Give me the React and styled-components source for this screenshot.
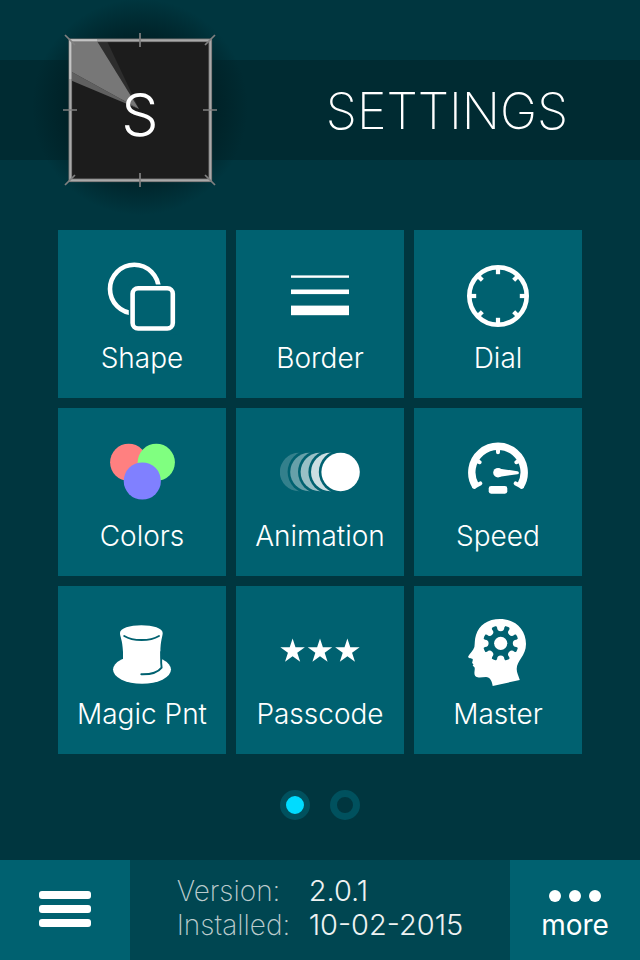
import React from 'react';
import styled, { createGlobalStyle } from 'styled-components';

const TILE = '#006170';

const Base = createGlobalStyle`
body{
    margin: 0;
    background: #00363f;
    color: white;
    font-family: "Inter", "Liberation Sans", sans-serif;
}

button{
    border: 0;
    padding: 0;
    color: inherit;
    font-family: inherit;
    cursor: pointer;
}

svg{
    display: block;
    flex: none;
}
`;

const Page = styled.div`
min-height: 100vh;
display: flex;
flex-direction: column;
overflow: hidden;
`;

const Header = styled.header`
display: flex;
align-items: center;
height: 100px;
margin-top: 60px;
padding: 0 6px 0 20px;
background: #002b32;

h1{
    flex: 1;
    margin: 0;
    padding-top: 2px;
    font-size: 50px;
    line-height: 60px;
    font-weight: 200;
    text-align: center;
}
`;

const Grid = styled.main`
display: grid;
grid-template-columns: repeat(3, 1fr);
gap: 10px;
padding: 70px 58px 0;
`;

const Tile = styled.button`
display: flex;
flex-direction: column;
align-items: center;
gap: 2px;
aspect-ratio: 1;
background: ${TILE};

&&{
    padding-top: 28px;
}

span{
    font-size: 28px;
    line-height: 36px;
    font-weight: 300;
}
`;

const Pager = styled.nav`
display: flex;
justify-content: center;
gap: 20px;
padding: 36px 0 40px;
`;

const Dot = styled.button`
box-sizing: border-box;
width: 30px;
height: 30px;
border-radius: 50%;
background: ${props => props.$active ? '#00dcff' : '#00363f'};

&&{
    border: ${props => props.$active ? 6 : 7}px solid #00515e;
}
`;

const Footer = styled.footer`
display: flex;
height: 100px;
margin-top: auto;
background: #004651;
`;

const FooterButton = styled.button`
display: flex;
flex-direction: column;
align-items: center;
justify-content: center;
gap: 5px;
width: 130px;
background: ${TILE};
font-size: 28px;
line-height: 36px;
font-weight: 400;

&&{
    padding: ${props => props.$labelled ? '12px 0 0' : '0 0 2px'};
}
`;

const Info = styled.dl`
flex: 1;
display: grid;
grid-template-columns: 112px auto;
column-gap: 20px;
align-content: center;
justify-content: center;
margin: 0;
padding-bottom: 4px;
font-size: 28px;
line-height: 34px;

dt{
    color: #bccbcd;
    font-weight: 250;
    white-space: nowrap;
}

dd{
    margin: 0;
    color: #eef2f2;
    font-size: 29px;
    font-weight: 350;
    white-space: nowrap;
}
`;

const PreviewImage = styled.svg`
margin: -70px 0;
`;

const Preview = () => <PreviewImage width='240' height='240' viewBox='20 -10 240 240'>
    <defs>
        <radialGradient id='shade'>
            <stop offset='0.6' stopColor='#001f24' stopOpacity='0.95' />
            <stop offset='0.75' stopColor='#001f24' stopOpacity='0.6' />
            <stop offset='1' stopColor='#001f24' stopOpacity='0' />
        </radialGradient>
    </defs>
    <circle cx='140' cy='107' r='108' fill='url(#shade)' />
    <rect x='70.3' y='40.3' width='140' height='140' fill='#1c1c1c' />
    <path d='M139 109 L97 41 H107 Z' fill='#2d2d2d' />
    <path d='M139 109 L70 80 V71 Z' fill='#606060' />
    <path d='M139 109 L97 41 H70 V71 Z' fill='#777777' />
    <rect x='70.3' y='40.3' width='140' height='140' fill='none' stroke='#6f6f6f' strokeWidth='3.6' />
    <rect x='70.3' y='40.3' width='140' height='140' fill='none' stroke='#a9a9a9' strokeWidth='2' />
    <path d='M70.3 79 V40.3 H97' fill='none' stroke='#c4c4c4' strokeWidth='2' />
    <path
        d='M140 33 V47 M140 173 V187 M63 110 H77 M203 110 H217 M65 35 L75 45 M215 35 L205 45 M65 185 L75 175 M215 185 L205 175'
        stroke='#808080'
        strokeWidth='1.7'
    />
    <text x='140' y='136' fill='white' fontSize='59' fontWeight='350' textAnchor='middle'>S</text>
</PreviewImage>

const Icon = ({ children }) => <svg width='80' height='80' viewBox='0 0 80 80' fill='white' aria-hidden='true'>{children}</svg>

const ShapeIcon = () => <Icon>
    <circle cx='32.3' cy='31' r='24.3' fill='none' stroke='white' strokeWidth='4.6' />
    <rect x='26.8' y='26.4' width='50' height='50' rx='1' fill={TILE} />
    <rect x='30.6' y='30.3' width='40.2' height='40.2' rx='5.5' fill='none' stroke='white' strokeWidth='4.6' />
</Icon>

const BorderIcon = () => <Icon>
    <rect x='11' y='17.4' width='58' height='2.4' />
    <rect x='11' y='31.5' width='58' height='4.6' />
    <rect x='11' y='47.6' width='58' height='9.6' />
</Icon>

const DialIcon = () => <Icon>
    <circle cx='40' cy='38' r='28.7' fill='none' stroke='white' strokeWidth='4.6' />
    {[0, 45, 90, 135, 180, 225, 270, 315].map(a =>
        <rect key={a} x='37.9' y='9' width='4.2' height={a % 90 ? 6.8 : 7.2} transform={`rotate(${a} 40 38)`} />
    )}
</Icon>

const ColorsIcon = () => <Icon>
    <circle cx='26.7' cy='26.3' r='18.6' fill='#ff8080' />
    <circle cx='54.3' cy='26.3' r='18.6' fill='#80ff80' />
    <circle cx='40.3' cy='45' r='18.6' fill='#8080ff' />
</Icon>

const AnimationIcon = () => <Icon>
    {[0.2, 0.4, 0.6, 0.8, 1].map((o, i) => <g key={o}>
        <circle cx={19 + i * 10.4} cy='36' r={i ? 21.8 : 0} fill={TILE} />
        <circle cx={19 + i * 10.4} cy='36' r='19.2' fillOpacity={o} />
    </g>)}
</Icon>

const SpeedIcon = () => <Icon>
    <path d='M17.6 50 A26.2 26.2 0 1 1 62.4 50' fill='none' stroke='white' strokeWidth='7.4' />
    <circle cx='16.3' cy='50.6' r='2.3' />
    <circle cx='63.7' cy='50.6' r='2.3' />
    <path
        d='M40 12 V16.2 M17 23.7 L21.6 26.2 M63 23.7 L58.4 26.2 M16.6 50.6 L22.3 47.4 M63.4 50.6 L57.7 47.4'
        stroke='white'
        strokeWidth='4'
        strokeLinecap='round'
    />
    <circle cx='40' cy='36.7' r='4.8' />
    <path d='M40 32.4 L59.4 35.2 A1.5 1.5 0 0 1 59.4 38.2 L40 41 Z' />
    <rect x='30.7' y='50' width='18.6' height='7.7' rx='2.4' />
</Icon>

const HatIcon = () => <Icon>
    <ellipse cx='40' cy='55.6' rx='29' ry='14.2' />
    <path d='M18 19 C18 14 28 11.2 39.3 11.2 C51 11.2 60.7 14 60.7 19 C60.7 22 58.4 27 58.4 38 L59.2 53 L40 58 L21 50 V38 C20.4 25 18 23 18 19 Z' />
    <path
        d='M22.2 22 C31 27.4 48 27.4 57 22 M39.3 60.3 C48 60.5 56 58.4 59.6 53.6 C58.8 48 59.2 44 59.2 38'
        fill='none'
        stroke={TILE}
        strokeWidth='1.9'
        strokeLinecap='round'
    />
</Icon>

const star = cx => Array.from({ length: 10 }, (_, i) => {
    const r = i % 2 ? 4.9 : 12.9;
    const a = Math.PI * (i / 5 - 0.5);
    return `${cx + r * Math.cos(a)},${37.3 + r * Math.sin(a)}`;
}).join(' ');

const PasscodeIcon = () => <Icon>
    {[12.6, 40, 67.4].map(cx => <polygon key={cx} points={star(cx)} />)}
</Icon>

const MasterIcon = () => <Icon>
    <path d='M42 5 C57 5 68 15.5 68 30 C68 42 58.7 46.5 58.7 55 C58.7 58.5 60.5 62 61.8 66 L34.7 72 C34 67 32 63 28 63 C25 63 22.5 63.8 19.7 63.3 C16.5 62.8 16.2 60.5 16.5 57.5 C16.8 55 17.2 53.2 15.3 52.2 C14.5 51.5 14.7 50.8 15.6 50.2 L14.3 49.3 C13.8 48 15 47.2 14.7 45 C13 44.3 9.5 44.4 10.3 42.3 C11.5 39.5 15.5 36.5 16.4 33 C17 29 16.5 25.5 18 21 C21 11 30 5 42 5 Z' />
    <circle cx='42.7' cy='29.3' r='17.8' fill={TILE} />
    {[0, 45, 90, 135, 180, 225, 270, 315].map(a =>
        <path key={a} d='M37.2 10.8 H48.2 L46.3 13.6 A3.6 3.6 0 0 1 39.1 13.6 Z' transform={`rotate(${a} 42.7 29.3)`} />
    )}
    <circle cx='42.7' cy='29.3' r='6.6' />
</Icon>

const tiles = [
    ['Shape', ShapeIcon],
    ['Border', BorderIcon],
    ['Dial', DialIcon],
    ['Colors', ColorsIcon],
    ['Animation', AnimationIcon],
    ['Speed', SpeedIcon],
    ['Magic Pnt', HatIcon],
    ['Passcode', PasscodeIcon],
    ['Master', MasterIcon]
];

class App extends React.Component{
    constructor(props){
        super(props);
        this.state = {
            page: 0
        }
    }

    render(){
        return <Page>
            <Base />
            <Header>
                <Preview />
                <h1>SETTINGS</h1>
            </Header>
            <Grid>
                {tiles.map(([label, Picture]) => <Tile key={label} type='button'>
                    <Picture />
                    <span>{label}</span>
                </Tile>)}
            </Grid>
            <Pager>
                {[0, 1].map(i => <Dot
                    key={i}
                    type='button'
                    aria-label={`Page ${i + 1}`}
                    $active={this.state.page === i}
                    onClick={() => this.setState({ page: i })}
                />)}
            </Pager>
            <Footer>
                <FooterButton type='button' aria-label='Menu'>
                    <svg width='52' height='36' viewBox='0 0 52 36' fill='white'>
                        <rect width='52' height='8' rx='3' />
                        <rect y='14' width='52' height='8' rx='3' />
                        <rect y='28' width='52' height='8' rx='3' />
                    </svg>
                </FooterButton>
                <Info>
                    <dt>Version:</dt>
                    <dd>2.0.1</dd>
                    <dt>Installed:</dt>
                    <dd>10-02-2015</dd>
                </Info>
                <FooterButton type='button' $labelled>
                    <svg width='52' height='12' viewBox='0 0 52 12' fill='white'>
                        <circle cx='6' cy='6' r='6' />
                        <circle cx='26' cy='6' r='6' />
                        <circle cx='46' cy='6' r='6' />
                    </svg>
                    more
                </FooterButton>
            </Footer>
        </Page>
    }

}

export default App;
